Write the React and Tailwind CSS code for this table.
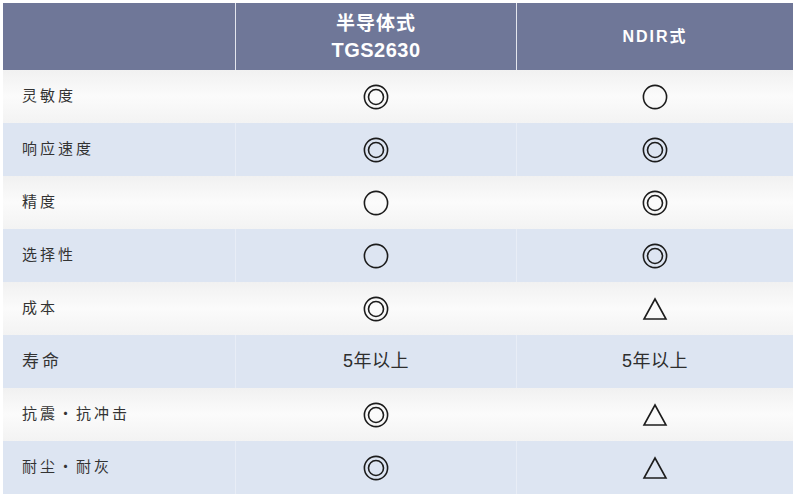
import React from 'react';

const rows = [
    { label: '灵敏度', a: 'double', b: 'circle' },
    { label: '响应速度', a: 'double', b: 'double' },
    { label: '精度', a: 'circle', b: 'double' },
    { label: '选择性', a: 'circle', b: 'double' },
    { label: '成本', a: 'double', b: 'triangle' },
    { label: '寿命', a: '5年以上', b: '5年以上', big: true },
    { label: '抗震・抗冲击', a: 'double', b: 'triangle' },
    { label: '耐尘・耐灰', a: 'double', b: 'triangle' },
];

const Mark = ({ value }) => {
    if (value === 'double') {
        return (
            <svg width="26" height="26" viewBox="0 0 26 26" fill="none" stroke="#1c1c1c" strokeWidth="1.6">
                <circle cx="13" cy="13" r="11.6" />
                <circle cx="13" cy="13" r="7.5" />
            </svg>
        );
    }
    if (value === 'circle') {
        return (
            <svg width="26" height="26" viewBox="0 0 26 26" fill="none" stroke="#1c1c1c" strokeWidth="1.6">
                <circle cx="13" cy="13" r="11.6" />
            </svg>
        );
    }
    if (value === 'triangle') {
        return (
            <svg width="26" height="24" viewBox="0 0 26 24" fill="none" stroke="#1c1c1c" strokeWidth="1.6" strokeLinejoin="miter">
                <path d="M13 2 L24 22 L2 22 Z" />
            </svg>
        );
    }
    return <span className="text-[18px] text-[#2e2e2e] tracking-[0.5px]">{value}</span>;
};

export default function App() {
    return (
        <div
            className="w-[795px] h-[494px] bg-white pt-[3px] pl-[3px] pr-[2px] overflow-hidden"
            style={{ fontFamily: '"Liberation Sans", "Noto Sans CJK SC", sans-serif' }}
        >
            {/* Header */}
            <div className="grid grid-cols-[232px_280px_1fr] gap-x-[1px] h-[67px] bg-[#e4e6ee]">
                <div className="bg-[#6f7798]" />
                <div className="bg-[#6f7798] flex flex-col items-center justify-center text-white font-bold leading-[27px] pt-[1px]">
                    <span className="text-[19px] tracking-[1px]">半导体式</span>
                    <span className="text-[20px] tracking-[0.5px]">TGS2630</span>
                </div>
                <div className="bg-[#6f7798] flex items-center justify-center text-white font-bold text-[16px] tracking-[2px]">
                    NDIR式
                </div>
            </div>

            {/* Body */}
            {rows.map((row, i) => {
                const blue = i % 2 === 1;
                return (
                    <div
                        key={row.label}
                        className={
                            blue
                                ? 'grid grid-cols-[232px_281px_1fr] h-[53px] bg-[#dde5f2]'
                                : 'grid grid-cols-[232px_281px_1fr] h-[53px] bg-gradient-to-b from-[#f1f1f1] via-[#fbfbfb] to-[#f3f3f3]'
                        }
                    >
                        <div
                            className={
                                row.big
                                    ? 'flex items-center pl-[19px] text-[17px] text-[#333] tracking-[3px]'
                                    : 'flex items-center pl-[19px] text-[15px] text-[#333] tracking-[3px]'
                            }
                        >
                            {row.label}
                        </div>
                        <div className={blue ? 'flex items-center justify-center border-l border-[#e8edf6]' : 'flex items-center justify-center'}>
                            <Mark value={row.a} />
                        </div>
                        <div className={blue ? 'flex items-center justify-center border-l border-[#e8edf6]' : 'flex items-center justify-center'}>
                            <Mark value={row.b} />
                        </div>
                    </div>
                );
            })}
        </div>
    );
}
